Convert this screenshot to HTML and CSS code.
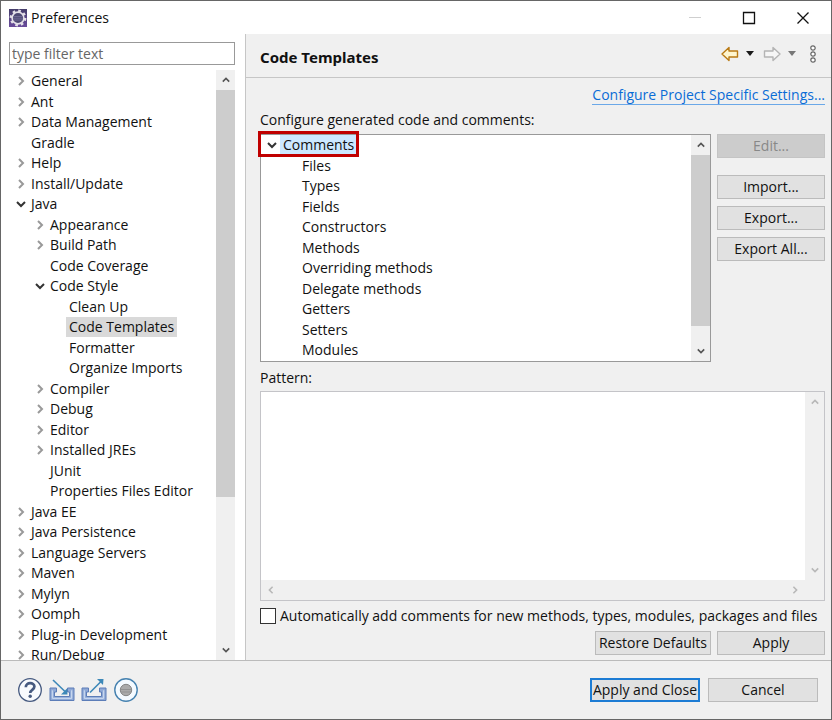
FILE: index.html
```html
<!DOCTYPE html>
<html lang="en">
<head>
<meta charset="utf-8">
<meta name="viewport" content="width=device-width, initial-scale=1">
<title>Preferences</title>
<link rel="stylesheet" href="styles.css">
</head>
<body>
<svg class="defs" aria-hidden="true">
  <symbol id="right" viewBox="0 0 10 10"><path d="M3 1l4 4-4 4" fill="none" stroke="currentColor" stroke-width="2"/></symbol>
  <symbol id="left" viewBox="0 0 10 10"><path d="M7 1L3 5l4 4" fill="none" stroke="currentColor" stroke-width="2"/></symbol>
  <symbol id="down" viewBox="0 0 10 10"><path d="M1 3l4 4 4-4" fill="none" stroke="currentColor" stroke-width="2"/></symbol>
  <symbol id="up" viewBox="0 0 10 10"><path d="M1 7l4-4 4 4" fill="none" stroke="currentColor" stroke-width="2"/></symbol>
</svg>
<div class="window">
  <header class="titlebar">
    <svg class="logo" viewBox="0 0 18 18" aria-hidden="true">
      <defs><linearGradient id="lg" x1="0" y1="0" x2="0" y2="1"><stop offset="0" stop-color="#453d6a"/><stop offset="1" stop-color="#6a4c9c"/></linearGradient></defs>
      <rect width="18" height="18" fill="url(#lg)"/>
      <circle cx="9" cy="9" r="7.2" fill="none" stroke="#e4e0e8" stroke-width="2.4" stroke-dasharray="2.6 3.05"/>
      <circle cx="9" cy="9" r="5.9" fill="#4d4873" stroke="#e4e0e8" stroke-width="1.6"/>
      <path d="M4.500 7.500h9M4 9.200h10M4.500 11h9" stroke="#77719a" stroke-width=".8"/>
    </svg>
    <span class="title">Preferences</span>
    <button class="winbtn" aria-label="Minimize" disabled><svg viewBox="0 0 14 14"><path d="M1 6.500h12" stroke="#cfcfcf"/></svg></button>
    <button class="winbtn" aria-label="Maximize"><svg viewBox="0 0 14 14"><path d="M1.500 1.500h11v11h-11z" fill="none" stroke="#111" stroke-width="1.300"/></svg></button>
    <button class="winbtn" aria-label="Close"><svg viewBox="0 0 14 14"><path d="M1.500 1.500l11 11M12.500 1.500l-11 11" stroke="#111" stroke-width="1.300"/></svg></button>
  </header>

  <div class="content">
    <nav class="sidebar" aria-label="Preference pages">
      <input class="filter" type="text" placeholder="type filter text" aria-label="Filter">
      <div class="scroller">
        <ul class="tree">
          <li><svg><use href="#right"/></svg><span>General</span></li>
          <li><svg><use href="#right"/></svg><span>Ant</span></li>
          <li><svg><use href="#right"/></svg><span>Data Management</span></li>
          <li class="leaf"><span>Gradle</span></li>
          <li><svg><use href="#right"/></svg><span>Help</span></li>
          <li><svg><use href="#right"/></svg><span>Install/Update</span></li>
          <li class="open"><svg><use href="#down"/></svg><span>Java</span></li>
          <li class="l2"><svg><use href="#right"/></svg><span>Appearance</span></li>
          <li class="l2"><svg><use href="#right"/></svg><span>Build Path</span></li>
          <li class="l2 leaf"><span>Code Coverage</span></li>
          <li class="l2 open"><svg><use href="#down"/></svg><span>Code Style</span></li>
          <li class="l3 leaf"><span>Clean Up</span></li>
          <li class="l3 leaf"><span class="current">Code Templates</span></li>
          <li class="l3 leaf"><span>Formatter</span></li>
          <li class="l3 leaf"><span>Organize Imports</span></li>
          <li class="l2"><svg><use href="#right"/></svg><span>Compiler</span></li>
          <li class="l2"><svg><use href="#right"/></svg><span>Debug</span></li>
          <li class="l2"><svg><use href="#right"/></svg><span>Editor</span></li>
          <li class="l2"><svg><use href="#right"/></svg><span>Installed JREs</span></li>
          <li class="l2 leaf"><span>JUnit</span></li>
          <li class="l2 leaf"><span>Properties Files Editor</span></li>
          <li><svg><use href="#right"/></svg><span>Java EE</span></li>
          <li><svg><use href="#right"/></svg><span>Java Persistence</span></li>
          <li><svg><use href="#right"/></svg><span>Language Servers</span></li>
          <li><svg><use href="#right"/></svg><span>Maven</span></li>
          <li><svg><use href="#right"/></svg><span>Mylyn</span></li>
          <li><svg><use href="#right"/></svg><span>Oomph</span></li>
          <li><svg><use href="#right"/></svg><span>Plug-in Development</span></li>
          <li><svg><use href="#right"/></svg><span>Run/Debug</span></li>
        </ul>
        <div class="vbar side-bar"><svg><use href="#up"/></svg><div class="track"><div class="thumb"></div></div><svg><use href="#down"/></svg></div>
      </div>
    </nav>

    <main class="page">
      <div class="page-head">
        <h1>Code Templates</h1>
        <button class="tool" aria-label="Back"><svg class="arrow" viewBox="0 0 18 16"><path d="M1 8l7-6.500v3.500h8.500v6h-8.500v3.500z" fill="#fff6cf" stroke="#b97a14" stroke-width="1.400" stroke-linejoin="round"/></svg></button>
        <button class="tool drop" aria-label="Back history"><svg class="caret" viewBox="0 0 8 5"><path d="M0 0h8L4 5z" fill="#1a1a1a"/></svg></button>
        <button class="tool" aria-label="Forward" disabled><svg class="arrow" viewBox="0 0 18 16"><path d="M17 8l-7-6.500v3.500H1.500v6H10v3.500z" fill="#f6f6f6" stroke="#b4b4b4" stroke-width="1.400" stroke-linejoin="round"/></svg></button>
        <button class="tool drop" aria-label="Forward history" disabled><svg class="caret" viewBox="0 0 8 5"><path d="M0 0h8L4 5z" fill="#777"/></svg></button>
        <button class="tool more" aria-label="Menu"><svg class="dots" viewBox="0 0 8 18"><g fill="#fff" stroke="#666" stroke-width="1.200"><circle cx="4" cy="3" r="2.200"/><circle cx="4" cy="9" r="2.200"/><circle cx="4" cy="15" r="2.200"/></g></svg></button>
      </div>
      <div class="page-body">
        <a class="link" href="#project">Configure Project Specific Settings...</a>
        <p class="label">Configure generated code and comments:</p>
        <div class="templates">
          <div class="listbox">
            <ul class="tree">
              <li class="open"><svg><use href="#down"/></svg><span class="picked">Comments</span></li>
              <li class="l2 leaf"><span>Files</span></li>
              <li class="l2 leaf"><span>Types</span></li>
              <li class="l2 leaf"><span>Fields</span></li>
              <li class="l2 leaf"><span>Constructors</span></li>
              <li class="l2 leaf"><span>Methods</span></li>
              <li class="l2 leaf"><span>Overriding methods</span></li>
              <li class="l2 leaf"><span>Delegate methods</span></li>
              <li class="l2 leaf"><span>Getters</span></li>
              <li class="l2 leaf"><span>Setters</span></li>
              <li class="l2 leaf"><span>Modules</span></li>
            </ul>
            <div class="vbar list-bar"><svg><use href="#up"/></svg><div class="track"><div class="thumb"></div></div><svg><use href="#down"/></svg></div>
            <div class="marker"></div>
          </div>
          <div class="actions">
            <button class="btn" disabled>Edit...</button>
            <button class="btn">Import...</button>
            <button class="btn">Export...</button>
            <button class="btn">Export All...</button>
          </div>
        </div>
        <label class="label pattern-label" for="pattern">Pattern:</label>
        <div class="pattern">
          <textarea id="pattern" readonly></textarea>
          <div class="vbar off"><svg><use href="#up"/></svg><div class="track"></div><svg><use href="#down"/></svg></div>
          <div class="hbar off"><svg><use href="#left"/></svg><svg><use href="#right"/></svg></div>
        </div>
        <div class="check"><input type="checkbox" id="auto"><label for="auto">Automatically add comments for new methods, types, modules, packages and files</label></div>
        <div class="page-buttons"><button class="btn">Restore Defaults</button><button class="btn">Apply</button></div>
      </div>
    </main>
  </div>

  <footer class="footer">
    <button class="tool" aria-label="Help"><svg viewBox="0 0 26 26"><circle cx="13" cy="13" r="11.300" fill="#f8fafd" stroke="#465a80" stroke-width="1.300"/><path d="M8.800 10.200c0-5.400 8.600-5.200 8.600-.600 0 3.300-4.200 3.100-4.200 6.400" fill="none" stroke="#465a80" stroke-width="2.700"/><circle cx="13.200" cy="19.300" r="1.700" fill="#465a80"/></svg></button>
    <button class="tool" aria-label="Import preferences"><svg viewBox="0 0 26 26"><path d="M7.500 11H1v12.500h24V11h-6.500v4h2v4.500h-15V15h2z" fill="#8fa9d6" stroke="#5c7db8" stroke-width="1"/><path d="M3.300 13.300v8h19.400v-8" fill="none" stroke="#d3e0f4"/><path d="M4 3l12 11.500" stroke="#3d88b8" stroke-width="1.600"/><path d="M18.500 17.500h-6.500l6-6z" fill="#3d88b8"/></svg></button>
    <button class="tool" aria-label="Export preferences"><svg viewBox="0 0 26 26"><path d="M7.500 11H1v12.500h24V11h-6.500v4h2v4.500h-15V15h2z" fill="#8fa9d6" stroke="#5c7db8" stroke-width="1"/><path d="M3.300 13.300v8h19.400v-8" fill="none" stroke="#d3e0f4"/><path d="M9 15.500L20 4.500" stroke="#3d88b8" stroke-width="1.600"/><path d="M22.500 2h-6.500l6 6z" fill="#3d88b8"/></svg></button>
    <button class="tool" aria-label="Record preferences"><svg viewBox="0 0 26 26"><circle cx="13" cy="13" r="11.200" fill="#f4faff" stroke="#4682b0" stroke-width="1.400"/><circle cx="13" cy="13" r="5.700" fill="#aaa" stroke="#858585"/><path d="M8 12.500h10M8 15h10" stroke="#929292"/></svg></button>
    <span class="spacer"></span>
    <button class="btn primary">Apply and Close</button>
    <button class="btn">Cancel</button>
  </footer>
</div>
</body>
</html>
```
FILE: styles.css
```css
* { box-sizing: border-box; }
body {
  margin: 0;
  color: #111;
  font: 14px/20px "Open Sans", "Noto Sans", sans-serif;
}
button, input, textarea { font: inherit; color: inherit; }
ul, p, h1 { margin: 0; padding: 0; }
.defs { display: none; }

.window {
  display: flex;
  flex-direction: column;
  height: 100vh;
  overflow: hidden;
  background: #fff;
  border: 1px solid #666;
}

.titlebar { display: flex; flex: 0 0 33px; align-items: center; padding: 0 1px 0 8px; }
.logo { width: 18px; height: 18px; }
.title { flex: 1; margin-left: 4px; }
.winbtn { width: 54px; height: 32px; padding: 0; border: 0; background: none; }
.winbtn svg { display: block; width: 14px; height: 14px; margin: auto; }

.content { display: flex; flex: 1; min-height: 0; }

.sidebar {
  display: flex;
  flex-direction: column;
  flex: 0 0 245px;
  padding: 8px 10px 0 8px;
  border-right: 1px solid #c6c6c6;
}
.filter { flex: 0 0 23px; width: 100%; padding: 0 2px; border: 1px solid #999; border-radius: 0; background: #fff; }
.filter::placeholder { color: #666; opacity: 1; }
.scroller { display: flex; flex: 1; min-height: 0; margin-top: 5px; overflow: hidden; }

.tree { flex: 1; padding-top: 1px; list-style: none; overflow: hidden; }
.tree li { display: flex; align-items: center; height: 20px; padding-left: 7px; white-space: nowrap; }
.tree li:nth-child(even) { height: 21px; }
.tree li.leaf { padding-left: 17px; }
.tree li.l2 { padding-left: 26px; }
.tree li.l2.leaf { padding-left: 36px; }
.tree li.l3.leaf { padding-left: 55px; }
.tree svg { width: 10px; height: 10px; color: #999; }
.tree .open svg { color: #333; }
.tree span { padding: 0 3px; margin-left: 2px; }
.tree .current { background: #d9d9d9; }
.tree .picked { background: #cce8ff; }

.vbar { display: flex; flex-direction: column; flex: 0 0 19px; align-items: center; justify-content: space-between; padding: 6px 0; background: #f0f0f0; color: #555; }
.vbar svg, .hbar svg { flex: none; width: 8px; height: 8px; }
.track { flex: 1; width: 100%; margin: 6px 0; }
.thumb { background: #cdcdcd; }
.side-bar .thumb { height: 74%; }
.list-bar .thumb { height: 92%; }
.off { color: #b8b8b8; }

.page { display: flex; flex: 1; flex-direction: column; min-width: 0; background: #f0f0f0; }
.page-head { display: flex; flex: 0 0 44px; align-items: center; padding: 0 14px 4px 14px; border-bottom: 1px solid #c6c6c6; }
h1 { flex: 1; padding-top: 7px; font: bold 15px/20px "Noto Sans", sans-serif; }
.tool { padding: 0; border: 0; background: none; }
.tool svg { display: block; }
.arrow { width: 18px; height: 16px; }
.drop { margin: 0 9px 0 7px; }
.caret { width: 8px; height: 5px; }
.more { margin-left: 4px; }
.dots { width: 8px; height: 18px; }

.page-body { display: flex; flex: 1; flex-direction: column; min-height: 0; padding: 8px 6px 5px 14px; }
.link { align-self: flex-end; line-height: 18px; color: #0a6cd6; text-decoration: none; border-bottom: 1px solid #6ba8e8; }
.label { margin-top: 5px; }
.templates { display: flex; flex: 0 0 228px; gap: 6px; margin-top: 4px; }
.listbox { position: relative; display: flex; flex: 1; background: #fff; border: 1px solid #999; }
.listbox .tree { padding-top: 0; }
.listbox .tree li { padding-left: 6px; }
.listbox .tree li.l2.leaf { padding-left: 36px; }
.listbox .picked { margin-left: 3px; }
.marker { position: absolute; top: -4px; left: -3px; width: 101px; height: 26px; border: 3px solid #c00000; }

.actions { display: flex; flex: 0 0 108px; flex-direction: column; gap: 7px; }
.btn { height: 24px; padding: 0 2px; border: 1px solid #bbb; border-radius: 0; background: #e1e1e1; color: #111; white-space: nowrap; }
.btn:disabled { margin-bottom: 10px; border-color: #c4c4c4; background: #ccc; color: #888; }
.primary { border: 2px solid #1c7cd4; padding: 0 1px; }

.pattern-label { margin-top: 6px; }
.pattern { display: grid; flex: 1; grid-template: 1fr 20px / 1fr 19px; min-height: 0; margin-top: 3px; border: 1px solid #c4c4c8; }
.pattern textarea { width: 100%; height: 100%; padding: 2px; border: 0; outline: 0; resize: none; background: #fff; }
.hbar { display: flex; align-items: center; justify-content: space-between; padding: 0 6px; }

.check { display: flex; align-items: center; gap: 4px; margin-top: 5px; white-space: nowrap; }
.check input { appearance: none; width: 16px; height: 16px; margin: 0; border: 1px solid #333; background: #fff; }
.page-buttons { display: flex; justify-content: flex-end; gap: 6px; margin-top: 5px; }
.page-buttons .btn { min-width: 108px; padding: 0 3px; }

.footer { display: flex; flex: 0 0 59px; align-items: center; gap: 6px; padding: 0 13px 0 16px; border-top: 1px solid #bbb; background: #f0f0f0; }
.footer .tool svg { width: 26px; height: 26px; }
.spacer { flex: 1; }
.footer .btn { flex: 0 0 110px; margin-left: 2px; }
```
